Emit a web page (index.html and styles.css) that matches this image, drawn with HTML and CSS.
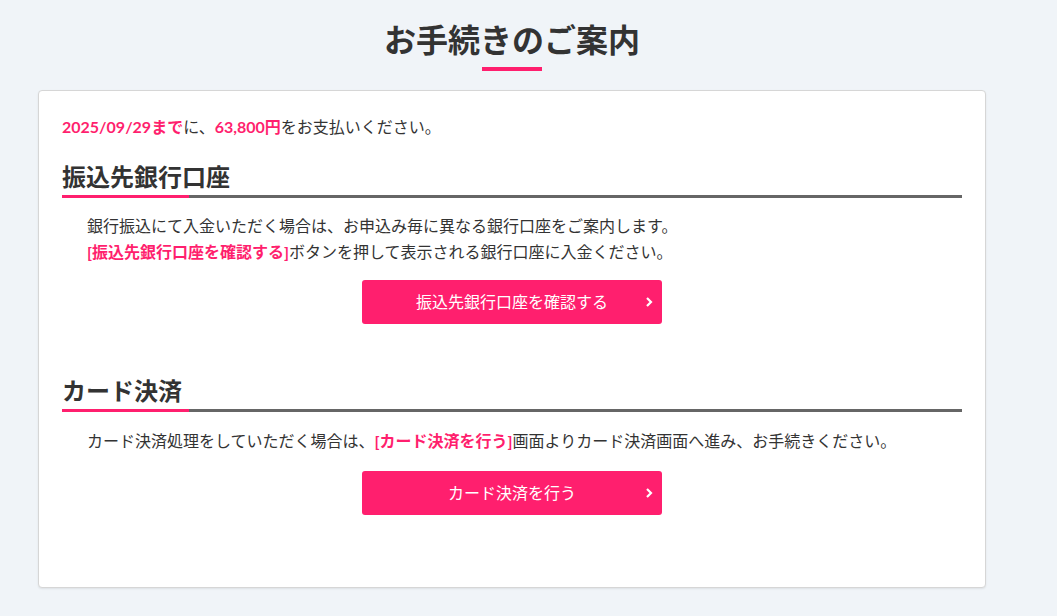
FILE: index.html
```html
<!DOCTYPE html>
<html lang="ja">
<head>
<meta charset="utf-8">
<title>お手続きのご案内</title>
<link rel="stylesheet" href="styles.css">
</head>
<body>
<div class="page">
  <h1 class="page-title">お手続きのご案内</h1>
  <div class="card">
    <p class="notice"><span class="em">2025/09/29まで</span>に、<span class="em">63,800円</span>をお支払いください。</p>

    <section class="section">
      <h2 class="section-title">振込先銀行口座</h2>
      <p class="section-text">銀行振込にて入金いただく場合は、お申込み毎に異なる銀行口座をご案内します。<br><span class="em">[振込先銀行口座を確認する]</span>ボタンを押して表示される銀行口座に入金ください。</p>
      <a class="btn" href="#">振込先銀行口座を確認する<svg class="chev" width="8" height="12" viewBox="0 0 8 12"><polyline points="2,2 6,6 2,10" fill="none" stroke="#fff" stroke-width="2.2"/></svg></a>
    </section>

    <section class="section">
      <h2 class="section-title">カード決済</h2>
      <p class="section-text">カード決済処理をしていただく場合は、<span class="em">[カード決済を行う]</span>画面よりカード決済画面へ進み、お手続きください。</p>
      <a class="btn" href="#">カード決済を行う<svg class="chev" width="8" height="12" viewBox="0 0 8 12"><polyline points="2,2 6,6 2,10" fill="none" stroke="#fff" stroke-width="2.2"/></svg></a>
    </section>
  </div>
</div>
</body>
</html>
```

FILE: styles.css
```css
* { box-sizing: border-box; }
html, body { margin: 0; padding: 0; }
body {
  background: #f0f4f8;
  color: #333;
  font-family: Lato, "Noto Sans CJK JP", sans-serif;
  font-size: 16px;
  line-height: 1.6;
}
.page {
  width: 1024px;
  padding: 16px 38px 40px;
}
.page-title {
  margin: 0;
  font-size: 32px;
  line-height: 48px;
  font-weight: 700;
  text-align: center;
}
.page-title::after {
  content: "";
  display: block;
  width: 60px;
  height: 4px;
  background: #ff1f6e;
  margin: 3px auto 0;
}
.card {
  margin-top: 19px;
  background: #fff;
  border: 1px solid #d6d6d6;
  border-radius: 4px;
  box-shadow: 0 1px 2px rgba(0,0,0,0.08);
  padding: 23px 23px 24px;
}
.notice {
  margin: 0;
  font-size: 16px;
  line-height: 26px;
}
.em { color: #ff1f6e; font-weight: 700; }
.section { margin-bottom: 48px; }
.notice + .section { margin-top: 18px; }
.section-title {
  margin: 0;
  font-size: 24px;
  line-height: 37px;
  font-weight: 700;
  border-bottom: 3px solid #666;
  position: relative;
}
.section-title::after {
  content: "";
  position: absolute;
  left: 0;
  bottom: -3px;
  width: 127px;
  height: 3px;
  background: #ff1f6e;
}
.section-text {
  margin: 15px 0 0;
  padding-left: 25px;
  font-size: 16px;
  line-height: 26px;
}
.section + .section .section-text { margin-top: 16px; }
.btn {
  display: flex;
  align-items: center;
  justify-content: center;
  position: relative;
  width: 300px;
  height: 44px;
  margin: 15px auto 0;
  background: #ff1f6e;
  color: #fff;
  border-radius: 3px;
  text-decoration: none;
  font-size: 16px;
}
.section + .section .btn { margin-top: 17px; }
.chev {
  position: absolute;
  right: 9px;
  top: 16px;
}
```
